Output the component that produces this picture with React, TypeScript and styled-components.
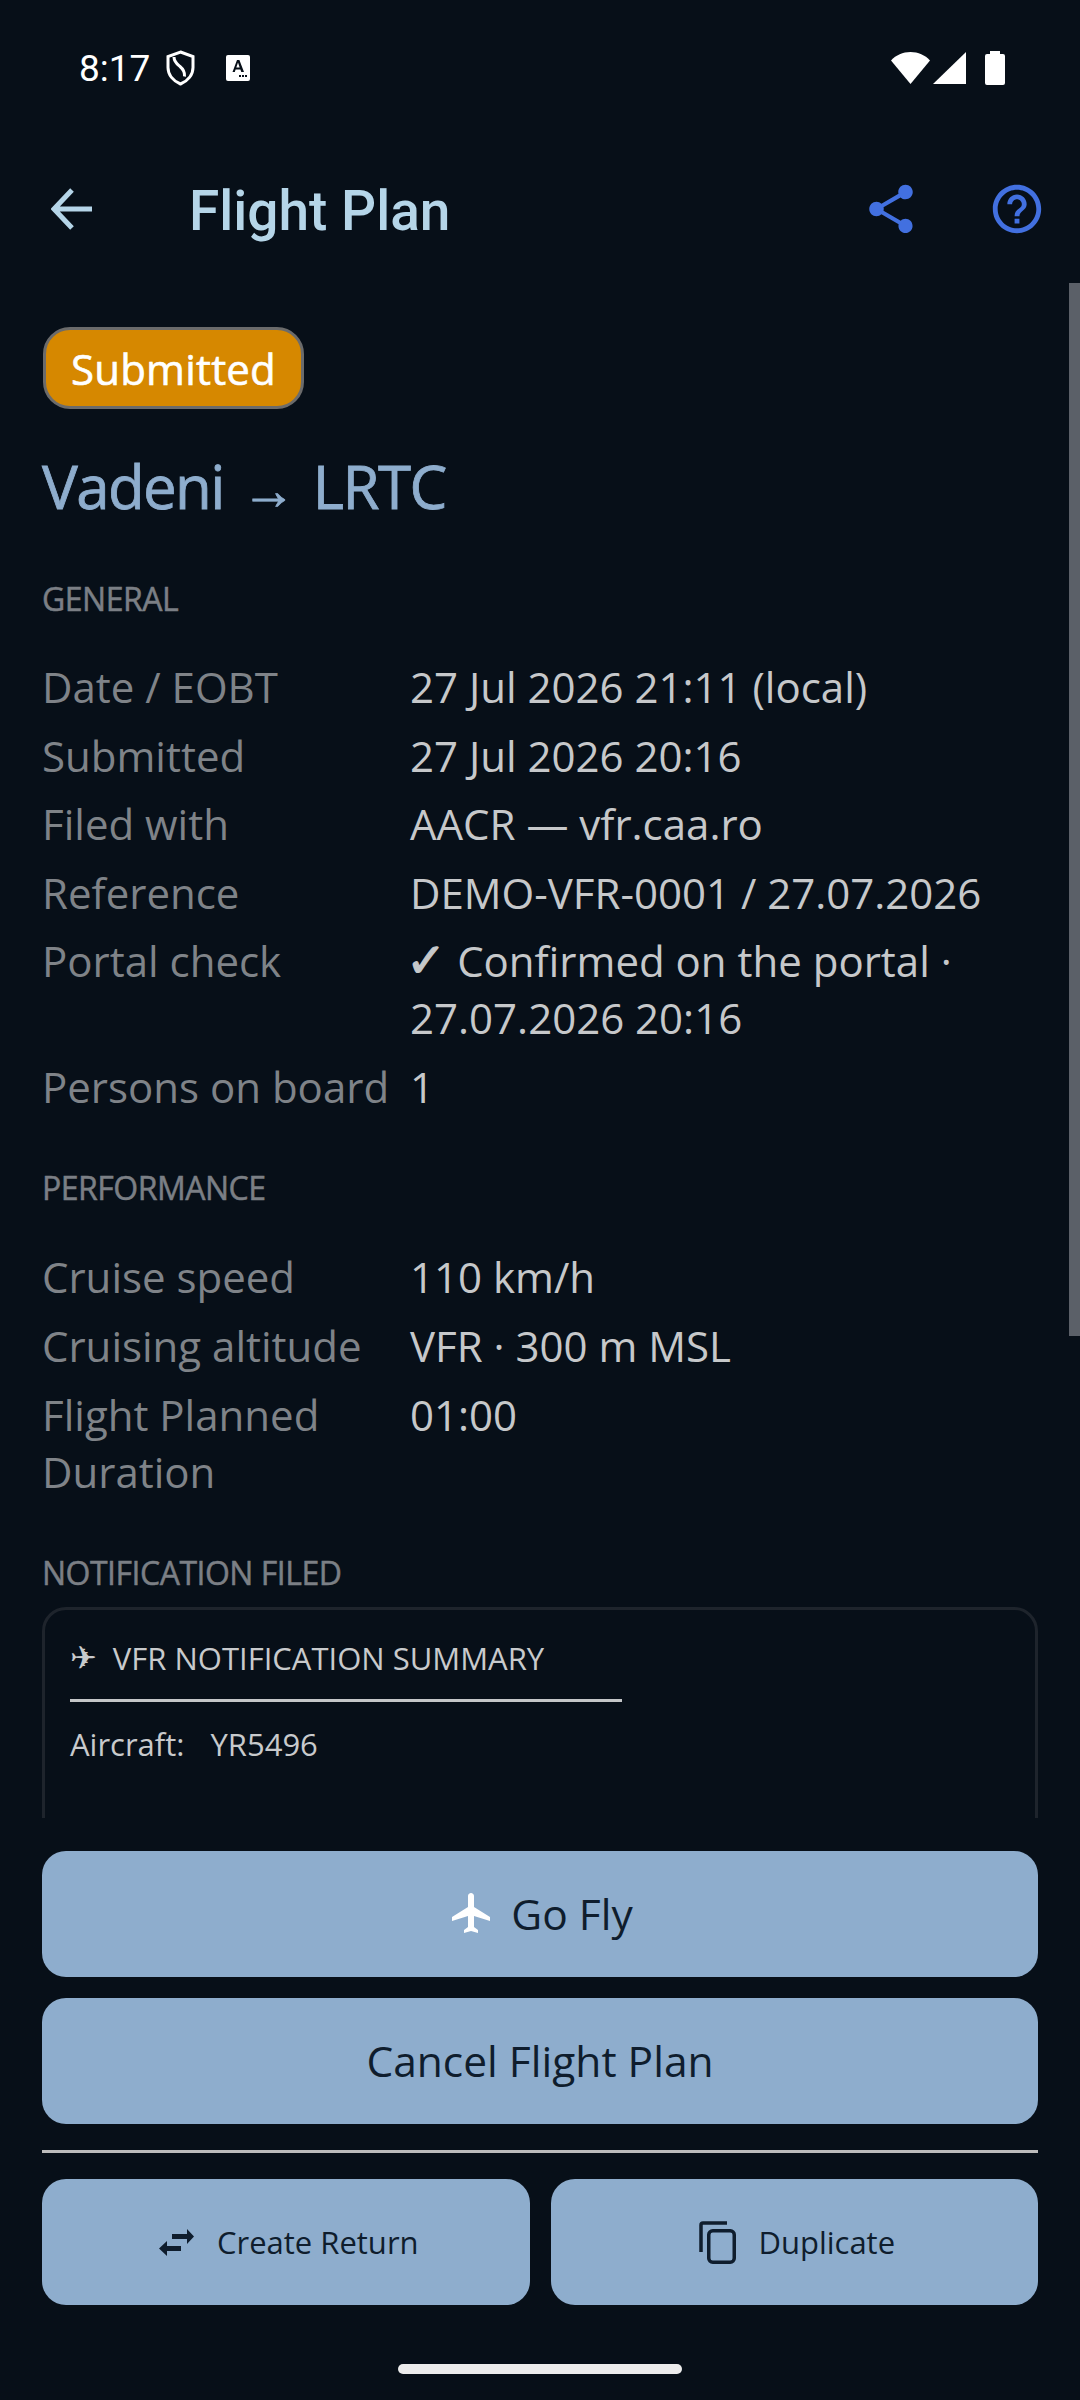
import React from "react";
import styled, { createGlobalStyle } from "styled-components";
import { MdHelpOutline, MdShare } from "react-icons/md";

const Global = createGlobalStyle`
  html, body { margin: 0; padding: 0; background: #070f18; }
  * { box-sizing: border-box; }
`;

const Page = styled.div`
  position: relative;
  width: 1080px;
  height: 2400px;
  background: #070f18;
  overflow: hidden;
  display: flex;
  flex-direction: column;
  font-family: "Open Sans", "Noto Sans", sans-serif;
`;

const StatusBar = styled.div`
  height: 136px;
  padding: 0 75px 0 79px;
  display: flex;
  align-items: center;
  color: #fff;
`;
const StatusGroup = styled.div`
  display: flex;
  align-items: center;
`;
const Clock = styled.span`
  font: 400 37px/1 Roboto, sans-serif;
  margin-right: 16px;
`;
const Spacer = styled.div`
  flex: 1;
`;
const StatusIcon = styled.svg<{ $mr?: number }>`
  display: block;
  margin-right: ${(p) => p.$mr ?? 0}px;
`;

const TopBar = styled.header`
  height: 147px;
  padding: 0 34px 0 51px;
  display: flex;
  align-items: center;
  padding-bottom: 2px;
`;
const Title = styled.h1`
  margin: 6px 0 0 96px;
  font: 500 55px/1 Roboto, sans-serif;
  color: #b5d5e8;
  flex: 1;
`;
const ActionIcon = styled.span<{ $ml?: number }>`
  display: flex;
  color: #4270e0;
  margin-left: ${(p) => p.$ml ?? 0}px;
`;

const Content = styled.main`
  height: 1535px;
  overflow: hidden;
  padding: 44px 42px 0;
`;
const Scrollbar = styled.div`
  position: absolute;
  right: 0;
  top: 283px;
  width: 11px;
  height: 1053px;
  background: #5b6068;
`;
const Badge = styled.div`
  display: inline-flex;
  align-items: center;
  height: 82px;
  margin-left: 1px;
  padding: 0 25px;
  border: 3px solid #6b6b6b;
  border-radius: 27px;
  background: #d68800;
  color: #fff;
  font-size: 42px;
  font-weight: 500;
  letter-spacing: 0.2px;
  -webkit-text-stroke: 0.6px #fff;
`;
const Route = styled.h2`
  margin: 36px 0 0;
  font-size: 60px;
  font-weight: 500;
  line-height: 82px;
  color: #8eadcd;
  letter-spacing: -1.6px;
  -webkit-text-stroke: 0.8px #8eadcd;
`;
const RouteArrow = styled.span`
  font-family: "Liberation Sans", sans-serif;
  font-size: 54px;
  letter-spacing: 0;
  margin: 0 3px 0 4px;
`;
const SectionLabel = styled.h3<{ $mt: number }>`
  margin: ${(p) => p.$mt}px 0 0;
  font-size: 32px;
  font-weight: 500;
  line-height: 42px;
  color: #7b7f85;
  letter-spacing: -0.5px;
  -webkit-text-stroke: 0.5px #7b7f85;
`;
const Rows = styled.div<{ $mt: number; $gap: number }>`
  margin-top: ${(p) => p.$mt}px;
  display: flex;
  flex-direction: column;
  gap: ${(p) => p.$gap}px;
`;
const Row = styled.div`
  display: grid;
  grid-template-columns: 368px 1fr;
  font-size: 42px;
  line-height: 57px;
`;
const Label = styled.span`
  color: #7f8388;
`;
const Value = styled.span`
  color: #c6c8ca;
`;
const Check = styled.span`
  font-family: "DejaVu Sans", sans-serif;
  font-size: 48px;
  line-height: 1;
  margin-left: -4px;
  -webkit-text-stroke: 1.2px #c6c8ca;
`;
const CardPlane = styled.span`
  font-family: "DejaVu Sans", sans-serif;
  font-size: 32px;
`;
const Card = styled.section`
  margin-top: 13px;
  height: 300px;
  border: 3px solid #1e242c;
  border-radius: 24px;
  padding: 27px 25px;
  color: #c8cacc;
  font-size: 31px;
  line-height: 42px;
`;
const CardHead = styled.div`
  display: flex;
  align-items: center;
  gap: 16px;
`;
const CardRule = styled.div`
  width: 552px;
  height: 3px;
  margin: 20px 0 21px;
  background: #c4c6c8;
`;
const CardRow = styled.div`
  display: flex;
  gap: 26px;
`;

const Footer = styled.footer`
  flex: 1;
  padding: 33px 42px 0;
  display: flex;
  flex-direction: column;
`;
const Button = styled.button<{ $size: number; $iconGap?: number }>`
  height: 126px;
  border: 0;
  border-radius: 24px;
  background: #8eadcd;
  color: #0f1d2d;
  font-family: inherit;
  font-size: ${(p) => p.$size}px;
  display: flex;
  align-items: center;
  justify-content: center;
  gap: ${(p) => p.$iconGap ?? 23}px;
  padding: 0 0 0 6px;
  flex: 1;
`;
const WideButton = styled(Button)`
  flex: none;
  width: 100%;
  margin-bottom: 21px;
  padding: 0 0 2px;
`;
const Divider = styled.div`
  height: 3px;
  background: #bcbcbc;
  margin: 5px 0 26px;
`;
const Split = styled.div`
  display: flex;
  gap: 21px;
`;
const HomeBar = styled.div`
  position: absolute;
  left: 398px;
  top: 2364px;
  width: 284px;
  height: 10px;
  border-radius: 5px;
  background: #ececec;
`;

const rows1: [string, React.ReactNode][] = [
  ["Date / EOBT", "27 Jul 2026 21:11 (local)"],
  ["Submitted", "27 Jul 2026 20:16"],
  ["Filed with", "AACR — vfr.caa.ro"],
  ["Reference", "DEMO-VFR-0001 / 27.07.2026"],
  ["Portal check", <><Check>✓</Check> Confirmed on the portal · 27.07.2026 20:16</>],
  ["Persons on board", "1"],
];
const rows2: [string, React.ReactNode][] = [
  ["Cruise speed", "110 km/h"],
  ["Cruising altitude", "VFR · 300 m MSL"],
  ["Flight Planned Duration", "01:00"],
];

const Plane = ({ size, fill }: { size: number; fill: string }) => (
  <svg width={size} height={size} viewBox="0 0 24 24" fill={fill}>
    <path d="M21 16v-2l-8-5V3.5C13 2.67 12.33 2 11.5 2S10 2.67 10 3.5V9l-8 5v2l8-2.5V19l-2 1.5V22l3.5-1 3.5 1v-1.5L13 19v-5.5l8 2.5z" transform="translate(.5 0)" />
  </svg>
);

export default function App() {
  return (
    <Page>
      <Global />
      <StatusBar>
        <StatusGroup>
          <Clock>8:17</Clock>
          <StatusIcon $mr={31} width="29" height="36" viewBox="0 0 29 36" fill="none" stroke="#fff" strokeWidth="3">
            <path d="M14.5 2 27 6.5v11c0 7.5-5.2 13.5-12.5 16.5C7.2 31 2 25 2 17.5v-11L14.5 2Z" />
            <path d="M8 7c0 5 3 7 6 9.5s5 5 4.5 10" />
          </StatusIcon>
          <StatusIcon width="24" height="26" viewBox="0 0 24 26">
            <rect width="24" height="26" rx="2" fill="#fff" />
            <path d="M6.5 17 11 5h2.4L18 17h-2.7l-.9-2.6H9.6L8.8 17H6.5Zm3.8-4.6h3.4L12 7.6l-1.7 4.8Z" fill="#070f18" />
            <path d="M13 20h2v2h-2zM16 20h2v2h-2zM19 20h2v2h-2z" fill="#070f18" />
          </StatusIcon>
        </StatusGroup>
        <Spacer />
        <StatusGroup>
          <StatusIcon $mr={3} width="39" height="32" viewBox="0 0 39 32" fill="#fff">
            <path d="M0 8.5C5 3 11.8 0 19.5 0S34 3 39 8.5L19.5 32 0 8.5Z" />
          </StatusIcon>
          <StatusIcon $mr={19} width="33" height="32" viewBox="0 0 33 32" fill="#fff">
            <path d="M33 0v32H0L33 0Z" />
          </StatusIcon>
          <StatusIcon width="20" height="34" viewBox="0 0 20 34" fill="#fff">
            <path d="M5 0h10v3h3a2 2 0 0 1 2 2v27a2 2 0 0 1-2 2H2a2 2 0 0 1-2-2V5a2 2 0 0 1 2-2h3V0Z" />
          </StatusIcon>
        </StatusGroup>
      </StatusBar>
      <TopBar>
        <svg width="42" height="42" viewBox="0 0 42 42" fill="none" stroke="#b5d5e8" strokeWidth="5">
          <path d="M41 21H4M21 2 3 21l18 19" />
        </svg>
        <Title>Flight Plan</Title>
        <ActionIcon><MdShare size={58} /></ActionIcon>
        <ActionIcon $ml={68}><MdHelpOutline size={58} /></ActionIcon>
      </TopBar>
      <Content>
        <Badge>Submitted</Badge>
        <Route>Vadeni <RouteArrow>→</RouteArrow> LRTC</Route>
        <SectionLabel $mt={47}>GENERAL</SectionLabel>
        <Rows $mt={38} $gap={11.5}>
          {rows1.map(([l, v]) => (
            <Row key={l}><Label>{l}</Label><Value>{v}</Value></Row>
          ))}
        </Rows>
        <SectionLabel $mt={52}>PERFORMANCE</SectionLabel>
        <Rows $mt={39} $gap={12}>
          {rows2.map(([l, v]) => (
            <Row key={l}><Label>{l}</Label><Value>{v}</Value></Row>
          ))}
        </Rows>
        <SectionLabel $mt={52}>NOTIFICATION FILED</SectionLabel>
        <Card>
          <CardHead><CardPlane>✈</CardPlane> VFR NOTIFICATION SUMMARY</CardHead>
          <CardRule />
          <CardRow><span>Aircraft:</span><span>YR5496</span></CardRow>
        </Card>
      </Content>
      <Footer>
        <WideButton $size={42.5} $iconGap={16}>
          <Plane size={48} fill="#fff" />
          Go Fly
        </WideButton>
        <WideButton $size={42.5}>Cancel Flight Plan</WideButton>
        <Divider />
        <Split>
          <Button $size={31}>
            <svg width="35" height="27" viewBox="0 0 35 27" fill="#0f1d2d">
              <path d="M13 5h15V0l7 7.5-7 7.5v-5H13V5ZM22 17H8v-5l-8 7.5L8 27v-5h14v-5Z" />
            </svg>
            Create Return
          </Button>
          <Button $size={31} $iconGap={22}>
            <svg width="37" height="43" viewBox="0 0 37 43" fill="none" stroke="#0f1d2d" strokeWidth="3.5">
              <path d="M28 2H4a2 2 0 0 0-2 2v27" />
              <rect x="9.75" y="9.75" width="25.5" height="31.5" rx="4" />
            </svg>
            Duplicate
          </Button>
        </Split>
      </Footer>
      <Scrollbar />
      <HomeBar />
    </Page>
  );
}
